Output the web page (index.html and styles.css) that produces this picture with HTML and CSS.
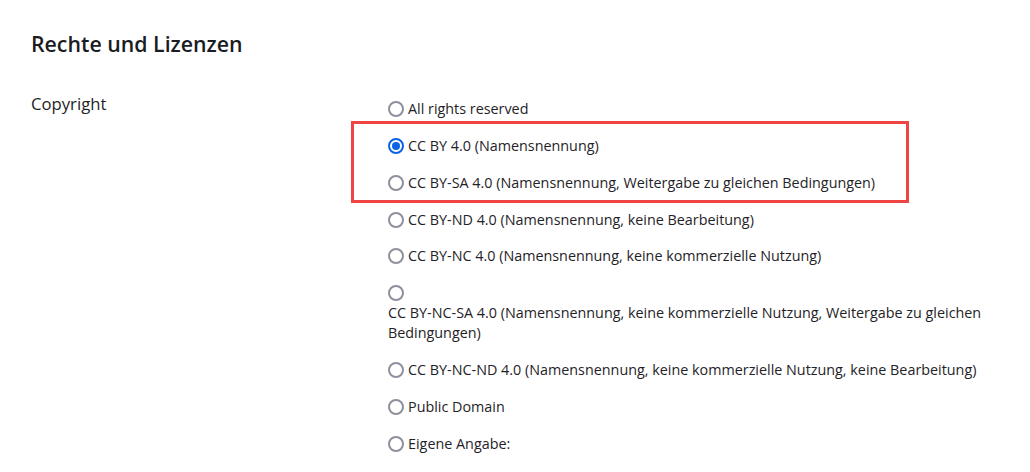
FILE: index.html
```html
<!DOCTYPE html>
<html lang="de">
<head>
<meta charset="utf-8">
<title>Rechte und Lizenzen</title>
<link rel="stylesheet" href="styles.css">
</head>
<body>
<main class="page">
  <h2 class="title">Rechte und Lizenzen</h2>
  <div class="form-row">
    <div class="label">Copyright</div>
    <div class="options">
      <label class="option"><input type="radio" name="lic" class="radio"><span class="text">All rights reserved</span></label>
      <label class="option"><input type="radio" name="lic" class="radio" checked><span class="text">CC BY 4.0 (Namensnennung)</span></label>
      <label class="option"><input type="radio" name="lic" class="radio"><span class="text">CC BY-SA 4.0 (Namensnennung, Weitergabe zu gleichen Bedingungen)</span></label>
      <label class="option"><input type="radio" name="lic" class="radio"><span class="text">CC BY-ND 4.0 (Namensnennung, keine Bearbeitung)</span></label>
      <label class="option"><input type="radio" name="lic" class="radio"><span class="text">CC BY-NC 4.0 (Namensnennung, keine kommerzielle Nutzung)</span></label>
      <label class="option"><input type="radio" name="lic" class="radio"><span class="text">CC BY-NC-SA 4.0 (Namensnennung, keine kommerzielle Nutzung, Weitergabe zu gleichen Bedingungen)</span></label>
      <label class="option"><input type="radio" name="lic" class="radio"><span class="text">CC BY-NC-ND 4.0 (Namensnennung, keine kommerzielle Nutzung, keine Bearbeitung)</span></label>
      <label class="option"><input type="radio" name="lic" class="radio"><span class="text">Public Domain</span></label>
      <label class="option"><input type="radio" name="lic" class="radio"><span class="text">Eigene Angabe:</span></label>
    </div>
  </div>
  <div class="highlight"></div>
</main>
</body>
</html>
```

FILE: styles.css
```css
html, body {
  margin: 0;
  padding: 0;
  background: #ffffff;
}

body {
  font-family: "Open Sans", "Noto Sans", sans-serif;
  color: #1f2328;
}

.page {
  position: relative;
  padding: 30px 30px 0 31px;
}

.title {
  margin: 0;
  font-size: 21.3px;
  line-height: 28px;
  font-weight: 600;
  color: #1a1c1f;
}

.form-row {
  margin-top: 35px;
  display: grid;
  grid-template-columns: 357px 612px;
  align-items: start;
}

.label {
  font-size: 16.7px;
  line-height: 22px;
  color: #1f2328;
}

.options {
  padding-top: 6px;
  display: flex;
  flex-direction: column;
  gap: 16.85px;
}

.option {
  display: flex;
  flex-wrap: wrap;
  align-items: flex-start;
  font-size: 14.35px;
  line-height: 20px;
  cursor: pointer;
}

.radio {
  appearance: none;
  -webkit-appearance: none;
  box-sizing: border-box;
  width: 16px;
  height: 16px;
  margin: 2px 4px 2px 0;
  border: 2px solid #8f8f9d;
  border-radius: 50%;
  background: #ffffff;
  flex: none;
  position: relative;
}

.radio:checked {
  border-color: #0b63e5;
}

.radio:checked::after {
  content: "";
  position: absolute;
  left: 2px;
  top: 2px;
  width: 8px;
  height: 8px;
  border-radius: 50%;
  background: #0b63e5;
}

.text {
  flex: 0 1 auto;
  min-width: 0;
}

.highlight {
  position: absolute;
  left: 351px;
  top: 121px;
  width: 552px;
  height: 76px;
  border: 3px solid #f04444;
  pointer-events: none;
}
```
